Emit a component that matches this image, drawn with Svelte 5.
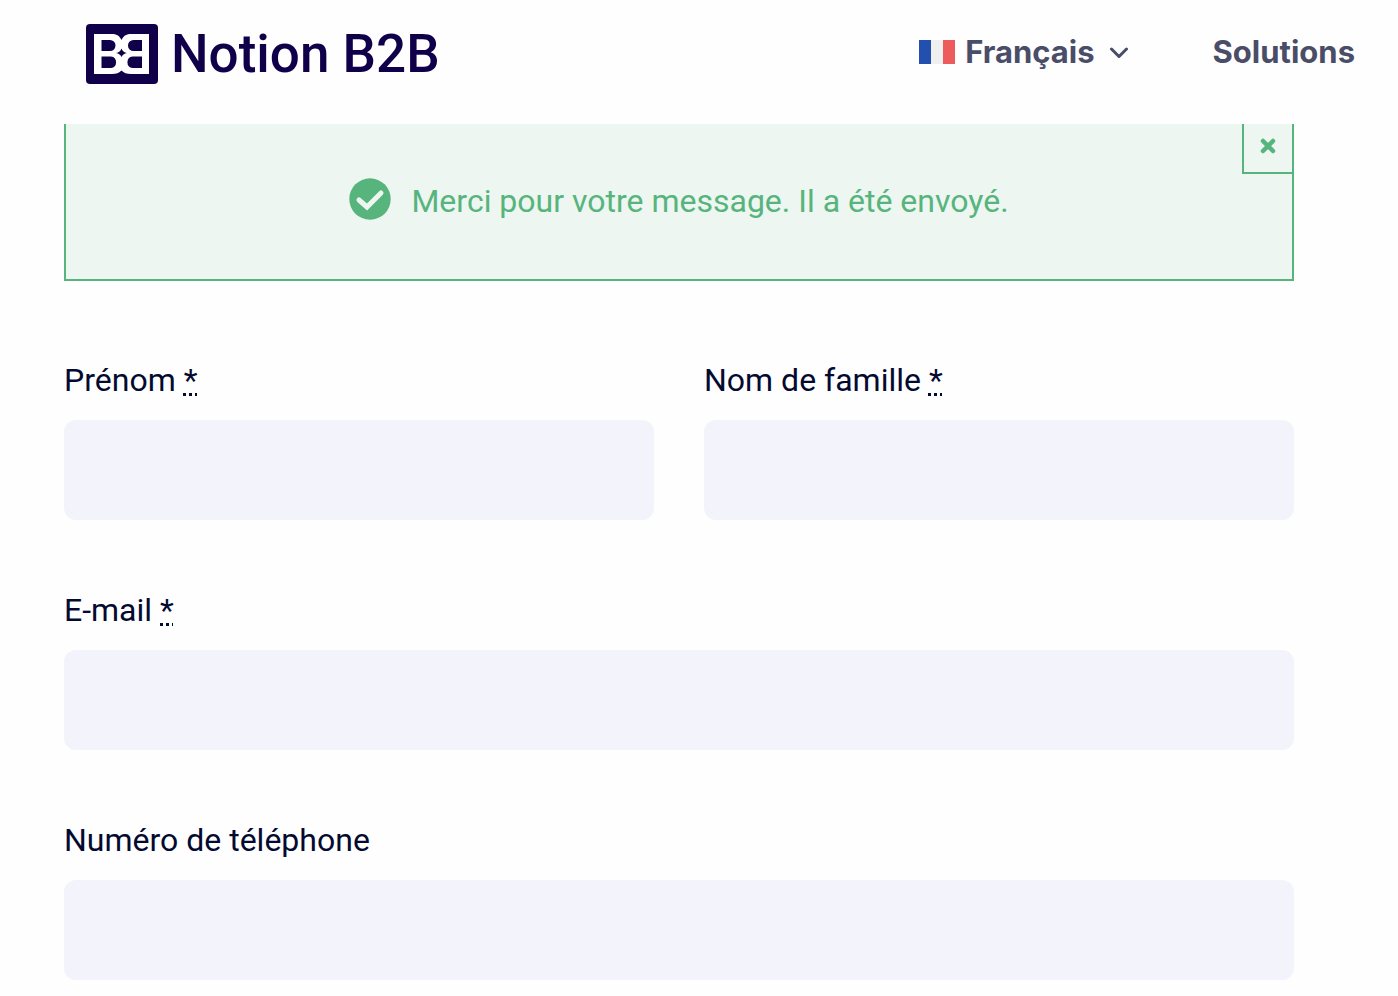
<script lang="ts">
	type Field = {
		id: string;
		label: string;
		type: 'text' | 'email' | 'tel';
		required?: boolean;
		half?: boolean;
	};

	const fields: Field[] = [
		{ id: 'first-name', label: 'Prénom', type: 'text', required: true, half: true },
		{ id: 'last-name', label: 'Nom de famille', type: 'text', required: true, half: true },
		{ id: 'email', label: 'E-mail', type: 'email', required: true },
		{ id: 'phone', label: 'Numéro de téléphone', type: 'tel' },
	];

	let values: Record<string, string> = $state({
		'first-name': '',
		'last-name': '',
		email: '',
		phone: '',
	});
	let showMessage = $state(true);
</script>

<header>
	<a class="logo" href="/">
		<svg viewBox="0 0 72 60" width="72" height="60" aria-hidden="true">
			<rect width="72" height="60" rx="4" fill="#10004a" />
			<path
				fill="#fff"
				d="M8 10H26C30 10 33.500 11.500 35.500 16C37.500 11.500 41 10 45 10H63V50H45C41 50 37.500 49 35.500 46.500C33.500 49 30 50 26 50H8Z"
			/>
			<g fill="#10004a">
				<path d="M15.500 16H24A5.500 5.500 0 0 1 24 27H15.500Z" />
				<path d="M56 16H47.500A5.500 5.500 0 0 0 47.500 27H56Z" />
				<path d="M15.500 32.500H25A5.800 5.800 0 0 1 25 44H15.500Z" />
				<path d="M56 32.500H46.500A5.800 5.800 0 0 0 46.500 44H56Z" />
				<path d="M35.500 24.500C36.500 27 38 28.500 41 29C38 29.500 36.500 31 35.500 33C34.500 31 33 29.500 30 29C33 28.500 34.500 27 35.500 24.500Z" />
			</g>
		</svg>
		<span>Notion B2B</span>
	</a>
	<nav>
		<button class="language" type="button">
			<svg viewBox="0 0 36 24" width="36" height="24" aria-hidden="true">
				<rect width="12" height="24" fill="#2350ae" />
				<rect x="12" width="12" height="24" fill="#f0f0f0" />
				<rect x="24" width="12" height="24" fill="#ee5b5c" />
			</svg>
			<span>Français</span>
			<svg class="chevron" viewBox="0 0 20 12" width="20" height="12" aria-hidden="true">
				<path d="M2.500 3L10 10.500L17.500 3" fill="none" stroke="currentColor" stroke-width="3" stroke-linecap="round" />
			</svg>
		</button>
		<a href="/solutions">Solutions</a>
	</nav>
</header>

<main>
	{#if showMessage}
		<div class="message" role="status">
			<svg viewBox="0 0 42 42" width="42" height="42" aria-hidden="true">
				<circle cx="21" cy="21" r="20.700" fill="#56b47c" />
				<path d="M10 22L18 29L32 15" fill="none" stroke="#edf6f1" stroke-width="5" stroke-linecap="round" />
			</svg>
			<p>Merci pour votre message. Il a été envoyé.</p>
			<button class="close" type="button" aria-label="Fermer" onclick={() => (showMessage = false)}>
				<svg viewBox="0 0 16 16" width="16" height="16" aria-hidden="true">
					<path d="M3 3L13 13M13 3L3 13" stroke="currentColor" stroke-width="4.500" stroke-linecap="round" />
				</svg>
			</button>
		</div>
	{/if}

	<form>
		{#each fields as field (field.id)}
			<div class="field" class:half={field.half}>
				<label for={field.id}>
					{field.label}
					{#if field.required}<abbr title="obligatoire">*</abbr>{/if}
				</label>
				<input id={field.id} type={field.type} required={field.required} bind:value={values[field.id]} />
			</div>
		{/each}
	</form>
</main>

<style>
	:global(body) {
		background: #fefefe;
		color: #030a30;
		font-family: Roboto, sans-serif;
		font-size: 32px;
	}

	header {
		display: flex;
		align-items: center;
		justify-content: space-between;
		height: 124px;
		padding: 0 43px 0 86px;
		box-sizing: border-box;
	}

	.logo {
		display: flex;
		align-items: center;
		gap: 13px;
		padding-bottom: 16px;
		color: #10004a;
		font-size: 53px;
		font-weight: 500;
		line-height: 60px;
		text-decoration: none;
		white-space: nowrap;
	}

	nav {
		display: flex;
		align-items: center;
		gap: 84px;
		padding-bottom: 20px;
	}

	nav a,
	.language {
		color: #4a4d68;
		font-family: Inter, sans-serif;
		font-size: 31px;
		font-weight: 700;
		line-height: 40px;
		text-decoration: none;
	}

	.language {
		display: flex;
		align-items: center;
		gap: 10px;
		padding: 0;
		border: 0;
		background: none;
		cursor: pointer;
	}

	.chevron {
		margin-left: 4px;
	}

	main {
		padding: 0 104px 40px 64px;
	}

	.message {
		position: relative;
		display: flex;
		align-items: center;
		justify-content: center;
		gap: 20px;
		padding: 47px 60px 52px;
		border: solid #56b47c;
		border-width: 0 2px 2px;
		background: #edf6f1;
		color: #56b47c;
	}

	.message p {
		margin: 0;
		padding-top: 4px;
		line-height: 52px;
	}

	.close {
		position: absolute;
		top: 0;
		right: 0;
		display: flex;
		align-items: center;
		justify-content: center;
		width: 50px;
		height: 50px;
		padding: 0 0 4px;
		border: solid #56b47c;
		border-width: 0 0 2px 2px;
		background: none;
		color: inherit;
		cursor: pointer;
	}

	form {
		display: grid;
		grid-template-columns: 1fr 1fr;
		gap: 60px 50px;
		margin-top: 69px;
	}

	.field {
		grid-column: span 2;
		display: flex;
		flex-direction: column;
		gap: 10px;
	}

	.half {
		grid-column: span 1;
	}

	label {
		line-height: 60px;
	}

	abbr {
		text-decoration: underline dotted 3px;
	}

	input {
		width: 100%;
		height: 100px;
		padding: 0 30px;
		box-sizing: border-box;
		border: 0;
		border-radius: 12px;
		background: #f3f3fc;
		color: inherit;
		font: inherit;
	}
</style>
